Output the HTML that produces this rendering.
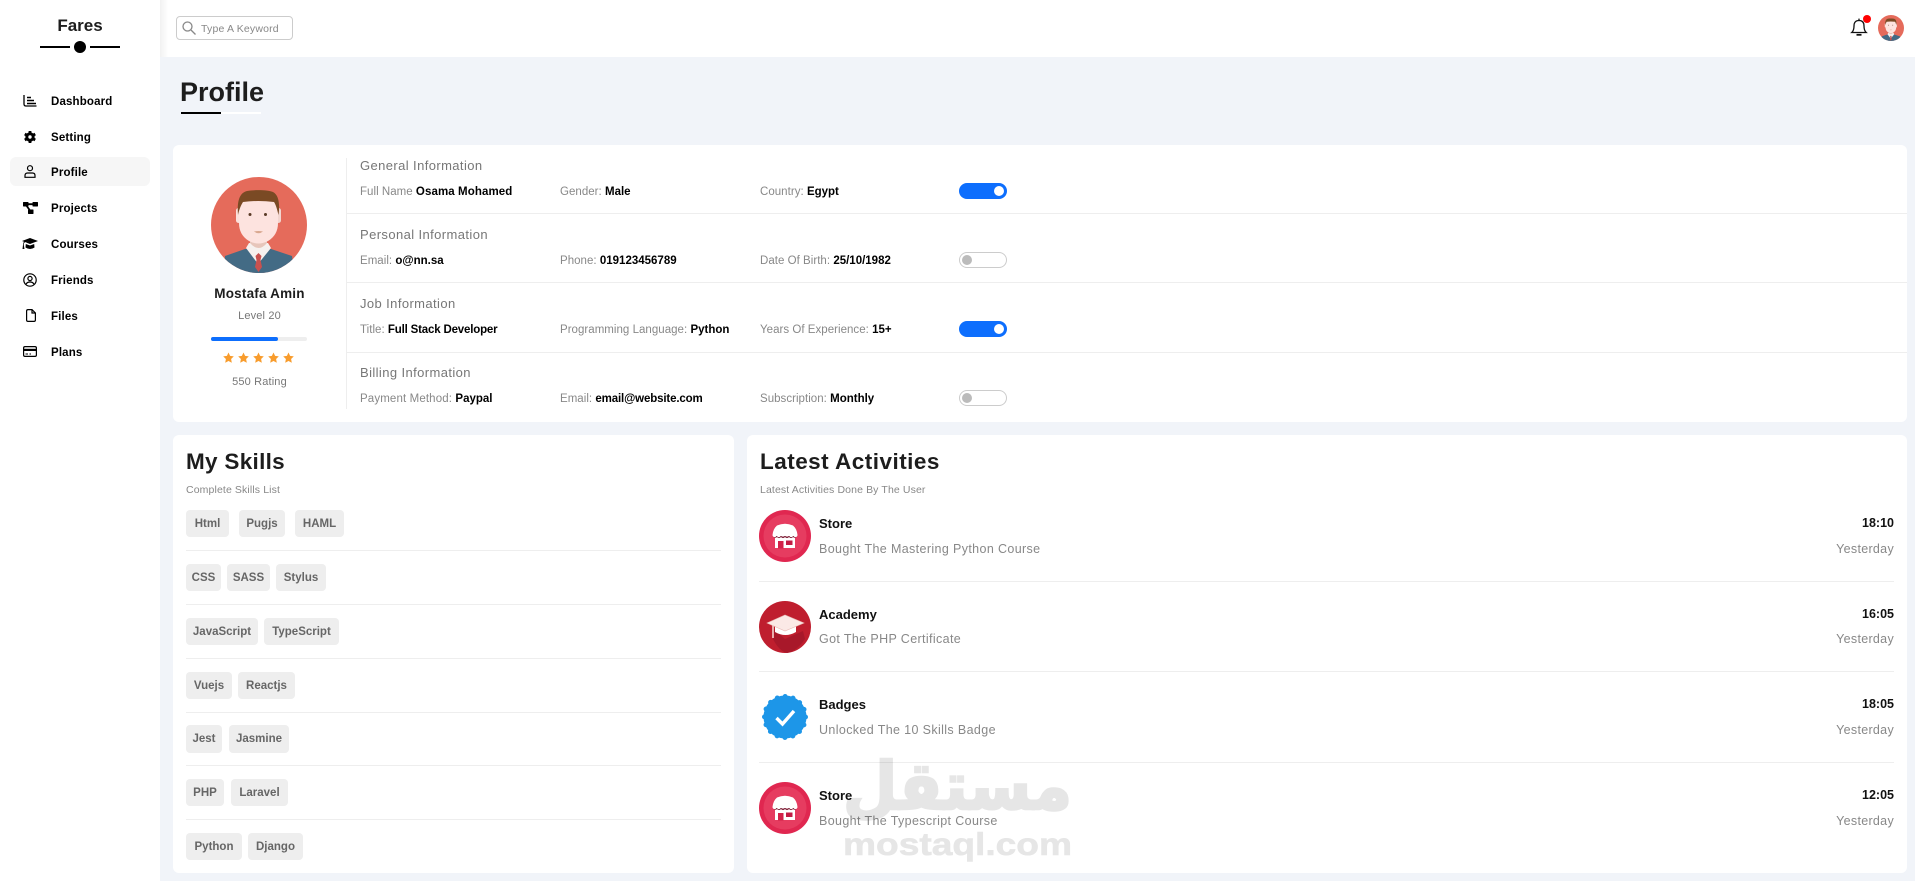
<!DOCTYPE html>
<html lang="en"><head><meta charset="utf-8"><title>Profile</title>
<style>
*{box-sizing:border-box;margin:0;padding:0}
html,body{width:1915px;height:881px;overflow:hidden;background:#f1f4f9;font-family:"Liberation Sans",sans-serif}
.a{position:absolute}
.t{position:absolute;white-space:nowrap;line-height:16px;height:16px;margin-top:-8px}
.card{position:absolute;background:#fff;border-radius:6px}
.h{height:1px;background:#eee;position:absolute}
.nav{font-size:11.5px;font-weight:700;color:#000;left:51px;letter-spacing:.15px;margin-top:-7px}
.sec{font-size:13px;color:#777;left:360px;letter-spacing:.4px}
.r{font-size:11.5px;color:#888;letter-spacing:.03px;margin-top:-7px}
.r b{color:#000;font-weight:700;letter-spacing:0}
.tg{position:absolute;left:959px;width:48px;height:16px;border-radius:8px}
.on{background:#0d6efd}
.on:after{content:"";position:absolute;right:3px;top:3px;width:10px;height:10px;border-radius:50%;background:#fff}
.off{background:#fff;border:1px solid #ccc}
.off:after{content:"";position:absolute;left:2px;top:2px;width:10px;height:10px;border-radius:50%;background:#bbb}
.chip{position:absolute;height:27px;line-height:28px;background:#eee;border-radius:4px;text-align:center;font-size:11.5px;font-weight:700;color:#666;letter-spacing:0}
.ct{font-size:22.5px;font-weight:700;color:#1d1d1d;letter-spacing:.3px;margin-top:-7px}
.cs{font-size:10.5px;color:#888;letter-spacing:.12px}
.at{font-size:13px;font-weight:700;color:#111;left:819px;margin-top:-7px}
.as{font-size:12.5px;color:#888;left:819px;letter-spacing:.37px}
.rt{right:21px;text-align:right}
.tm{font-size:12.5px;font-weight:700;color:#111}
.ys{font-size:12.5px;color:#888;letter-spacing:.3px}
svg{position:absolute;overflow:visible}
</style></head>
<body>
<svg width="0" height="0" style="position:absolute">
<defs>
<clipPath id="cc"><circle cx="48" cy="48" r="48"/></clipPath>
<symbol id="ava" viewBox="0 0 96 96">
<circle cx="48" cy="48" r="48" fill="#e56b5b"/>
<g clip-path="url(#cc)">
<path d="M14 79 L34 72 H60 L81 79 L84 100 H12Z" fill="#436b85"/>
<path d="M35 71 L47 87 L60 71 L57 66 H38Z" fill="#f6f1ef"/>
<path d="M39 58 H56 V66 Q47.500 76 39 66Z" fill="#e7c6bb"/>
<path d="M44.500 79 L47.500 76 L50.500 79 L49.500 83 L51 90 L47.500 95 L44 90 L45.500 83Z" fill="#c9514f"/>
<rect x="25" y="31" width="5" height="15" rx="2.500" fill="#fbe0db"/>
<rect x="65" y="31" width="5" height="15" rx="2.500" fill="#f2d6d0"/>
<path d="M28 24 H67 V46 Q67 58 57 64 Q47.500 69 38 64 Q28 58 28 46Z" fill="#fde3df"/>
<path d="M27 38 C26 25 28 16 36 14 C44 12.500 58 13 62 15 C68 18 69 28 67.500 38 C66 32 65 28 63 25 Q47 23 32 25 C30 28 28 33 27 38Z" fill="#7a4a24"/>
<circle cx="39" cy="37.500" r="1.500" fill="#5a3a26"/><circle cx="54.500" cy="37.500" r="1.500" fill="#5a3a26"/>
<path d="M43 54.500 Q47.500 53.500 52 54.500 Q47.500 58 43 54.500Z" fill="#d9a890"/>
</g></symbol>
<symbol id="store" viewBox="0 0 52 52">
<circle cx="26" cy="26" r="26" fill="#e02750"/>
<circle cx="26" cy="26" r="21.500" fill="#e63c60"/>
<path d="M16 25 V38 H36 V25Z" fill="#fff"/>
<path d="M14 26 a2.400 2.400 0 0 0 4 1 a2.400 2.400 0 0 0 4 0 a2.400 2.400 0 0 0 4 0 a2.400 2.400 0 0 0 4 0 a2.400 2.400 0 0 0 4 0 a2.400 2.400 0 0 0 4 -1Z" fill="#7d1c34"/>
<path d="M18 15.500 Q26 12 34 15.500 Q38 19 38.500 25 H13.500 Q14 19 18 15.500Z" fill="#fff"/>
<path d="M13.500 25 a2.100 2.100 0 0 0 4.200 0 a2.100 2.100 0 0 0 4.200 0 a2.100 2.100 0 0 0 4.100 0 a2.100 2.100 0 0 0 4.100 0 a2.100 2.100 0 0 0 4.200 0 a2.100 2.100 0 0 0 4.200 0Z" fill="#fff"/>
<rect x="19" y="31" width="5.500" height="7.500" fill="#d22249"/>
<rect x="27" y="30.500" width="6.500" height="4.500" fill="#c21c44"/>
</symbol>
</defs></svg>

<!-- sidebar -->
<div class="a" style="left:0;top:0;width:160px;height:881px;background:#fff"></div>
<div class="t" style="left:0;width:160px;text-align:center;top:26px;font-size:17px;font-weight:700;color:#1d1d1d">Fares</div>
<div class="a" style="left:40px;top:46px;width:30px;height:2px;background:#000"></div>
<div class="a" style="left:90px;top:46px;width:30px;height:2px;background:#000"></div>
<div class="a" style="left:74px;top:41px;width:12px;height:12px;border-radius:50%;background:#000"></div>
<div class="a" style="left:10px;top:157px;width:140px;height:29px;border-radius:6px;background:#f6f6f6"></div>

<div class="t nav" style="top:101px">Dashboard</div>
<div class="t nav" style="top:137px">Setting</div>
<div class="t nav" style="top:172px">Profile</div>
<div class="t nav" style="top:208px">Projects</div>
<div class="t nav" style="top:244px">Courses</div>
<div class="t nav" style="top:280px">Friends</div>
<div class="t nav" style="top:316px">Files</div>
<div class="t nav" style="top:352px">Plans</div>

<!-- nav icons -->
<svg style="left:23px;top:94px" width="14" height="13" viewBox="0 0 14 13" fill="none" stroke="#000" stroke-width="1.300"><path d="M1 1 V10 Q1 12 3 12 H13.500"/><path d="M4 3.500 H8 M4 6.500 H11 M4 9.500 H13" stroke-width="1.400"/></svg>
<svg style="left:24px;top:131px" width="12" height="12" viewBox="0 0 12 12"><circle cx="6" cy="6" r="3.200" fill="none" stroke="#000" stroke-width="3"/><path d="M6 0 V12 M.8 3 L11.200 9 M.8 9 L11.200 3" stroke="#000" stroke-width="2.800" fill="none"/><circle cx="6" cy="6" r="1.700" fill="#fff"/></svg>
<svg style="left:24px;top:165px" width="12" height="13" viewBox="0 0 12 13" fill="none" stroke="#000" stroke-width="1.200"><circle cx="6" cy="3.200" r="2.500"/><path d="M1 12.300 V10.500 Q1 8 3.500 8 H8.500 Q11 8 11 10.500 V12.300Z"/></svg>
<svg style="left:23px;top:202px" width="15" height="12" viewBox="0 0 15 12"><rect x="0" y="0" width="5.500" height="4.500" rx=".6"/><rect x="9.500" y="0" width="5.500" height="4.500" rx=".6"/><rect x="5" y="7.500" width="5.500" height="4.500" rx=".6"/><path d="M4 2.200 H11 M3 3 L7 8.500" stroke="#000" stroke-width="1.800" fill="none"/></svg>
<svg style="left:22px;top:238px" width="16" height="12" viewBox="0 0 16 12"><path d="M8 0 L16 3 L8 6 L3.500 4.300 L8 3.500 L2.800 4.300 Q1.800 5 1.800 7 L2.500 11 H.500 L1 7 Q1 4.800 2 3.800 L0 3Z"/><path d="M3.800 6 L8 7.500 L12.200 6 L12.500 9.500 Q8 12.500 3.500 9.500Z"/></svg>
<svg style="left:23px;top:273px" width="14" height="14" viewBox="0 0 14 14" fill="none" stroke="#000" stroke-width="1.200"><circle cx="7" cy="7" r="6.200"/><circle cx="7" cy="5.500" r="2.100"/><path d="M3 11.300 Q4 9 7 9 Q10 9 11 11.300"/></svg>
<svg style="left:26px;top:309px" width="10" height="13" viewBox="0 0 10 13" fill="none" stroke="#000" stroke-width="1.200"><path d="M6 .6 H2 Q.6 .6 .6 2 V11 Q.6 12.400 2 12.400 H8 Q9.400 12.400 9.400 11 V4Z"/><path d="M6 .6 V4 H9.400"/></svg>
<svg style="left:23px;top:346px" width="14" height="11" viewBox="0 0 14 11" fill="none" stroke="#000" stroke-width="1.200"><rect x=".6" y=".6" width="12.800" height="9.800" rx="1.400"/><rect x="0" y="2.800" width="14" height="2.200" fill="#000" stroke="none"/><path d="M2.500 8 H5 M6.500 8 H8" stroke-width="1"/></svg>

<!-- topbar -->
<div class="a" style="left:160px;top:0;width:1755px;height:57px;background:#fff"></div>
<div class="a" style="left:160px;top:0;width:8px;height:57px;background:linear-gradient(90deg,#f1f1f1,#fff)"></div>
<div class="a" style="left:176px;top:16px;width:117px;height:24px;border:1px solid #ccc;border-radius:4px;background:#fff"></div>
<svg style="left:182px;top:21px" width="14" height="14" viewBox="0 0 14 14" fill="none" stroke="#888" stroke-width="1.300"><circle cx="5.500" cy="5.500" r="4.500"/><path d="M9 9 L13.500 13.500"/></svg>
<div class="t" style="left:201px;top:29px;font-size:10.500px;color:#888;letter-spacing:.18px">Type A Keyword</div>
<svg style="left:1851px;top:18px" width="16" height="19" viewBox="0 0 16 19" fill="none" stroke="#111" stroke-width="1.300"><path d="M.8 14.500 Q3 12.500 3 8 Q3 2.500 8 2.500 Q13 2.500 13 8 Q13 12.500 15.200 14.500Z"/><path d="M8 .6 V2.500" /><path d="M5.500 16.800 H10.500" stroke-width="1.800"/></svg>
<div class="a" style="left:1863px;top:15px;width:8px;height:8px;border-radius:50%;background:#f00"></div>
<svg style="left:1878px;top:15px" width="26" height="26"><use href="#ava" width="26" height="26"/></svg>

<!-- title -->
<div class="t" style="left:180px;top:92px;font-size:27px;line-height:30px;height:30px;margin-top:-15px;font-weight:700;color:#1d1d1d">Profile</div>
<div class="a" style="left:181px;top:112px;width:40px;height:2px;background:#000"></div>
<div class="a" style="left:221px;top:112px;width:40px;height:2px;background:#fff"></div>

<!-- profile card -->
<div class="card" style="left:173px;top:145px;width:1734px;height:277px"></div>
<div class="a" style="left:346px;top:158px;width:1px;height:251px;background:#eee"></div>
<div class="h" style="left:347px;top:213px;width:1560px"></div>
<div class="h" style="left:347px;top:282px;width:1560px"></div>
<div class="h" style="left:347px;top:352px;width:1560px"></div>

<svg style="left:211px;top:177px" width="96" height="96"><use href="#ava" width="96" height="96"/></svg>
<div class="t" style="left:173px;width:173px;text-align:center;top:293px;font-size:13.500px;font-weight:700;color:#1d1d1d;letter-spacing:.2px;margin-top:-7px">Mostafa Amin</div>
<div class="t" style="left:173px;width:173px;text-align:center;top:316px;font-size:11px;color:#777;letter-spacing:.15px">Level 20</div>
<div class="a" style="left:211px;top:337px;width:96px;height:4px;border-radius:2px;background:#eee"></div>
<div class="a" style="left:211px;top:337px;width:67px;height:4px;border-radius:2px;background:#0d6efd"></div>
<svg style="left:223px;top:352px" width="74" height="12" viewBox="0 0 74 12" fill="#f89c2d">
<path d="M5.500 .5 L7.100 3.900 L10.800 4.400 L8.100 7 L8.800 10.800 L5.500 9 L2.200 10.800 L2.900 7 L.2 4.400 L3.900 3.900Z"/>
<path transform="translate(15 0)" d="M5.500 .5 L7.100 3.900 L10.800 4.400 L8.100 7 L8.800 10.800 L5.500 9 L2.200 10.800 L2.900 7 L.2 4.400 L3.900 3.900Z"/>
<path transform="translate(30 0)" d="M5.500 .5 L7.100 3.900 L10.800 4.400 L8.100 7 L8.800 10.800 L5.500 9 L2.200 10.800 L2.900 7 L.2 4.400 L3.900 3.900Z"/>
<path transform="translate(45 0)" d="M5.500 .5 L7.100 3.900 L10.800 4.400 L8.100 7 L8.800 10.800 L5.500 9 L2.200 10.800 L2.900 7 L.2 4.400 L3.900 3.900Z"/>
<path transform="translate(60 0)" d="M5.500 .5 L7.100 3.900 L10.800 4.400 L8.100 7 L8.800 10.800 L5.500 9 L2.200 10.800 L2.900 7 L.2 4.400 L3.900 3.900Z"/>
</svg>
<div class="t" style="left:173px;width:173px;text-align:center;top:382px;font-size:11px;color:#777;letter-spacing:.15px">550 Rating</div>

<div class="t sec" style="top:166px">General Information</div>
<div class="t r" style="left:360px;top:191px">Full Name <b style="letter-spacing:.1px">Osama Mohamed</b></div>
<div class="t r" style="left:560px;top:191px">Gender: <b>Male</b></div>
<div class="t r" style="left:760px;top:191px">Country: <b>Egypt</b></div>
<div class="tg on" style="top:183px"></div>

<div class="t sec" style="top:235px">Personal Information</div>
<div class="t r" style="left:360px;top:260px">Email: <b>o@nn.sa</b></div>
<div class="t r" style="left:560px;top:260px">Phone: <b>019123456789</b></div>
<div class="t r" style="left:760px;top:260px">Date Of Birth: <b>25/10/1982</b></div>
<div class="tg off" style="top:252px"></div>

<div class="t sec" style="top:304px">Job Information</div>
<div class="t r" style="left:360px;top:329px">Title: <b style="letter-spacing:-.18px">Full Stack Developer</b></div>
<div class="t r" style="left:560px;top:329px">Programming Language: <b>Python</b></div>
<div class="t r" style="left:760px;top:329px">Years Of Experience: <b>15+</b></div>
<div class="tg on" style="top:321px"></div>

<div class="t sec" style="top:373px">Billing Information</div>
<div class="t r" style="left:360px;top:398px;letter-spacing:.13px">Payment Method: <b>Paypal</b></div>
<div class="t r" style="left:560px;top:398px">Email: <b style="letter-spacing:-.14px">email@website.com</b></div>
<div class="t r" style="left:760px;top:398px">Subscription: <b>Monthly</b></div>
<div class="tg off" style="top:390px"></div>

<!-- skills -->
<div class="card" style="left:173px;top:435px;width:561px;height:438px"></div>
<div class="t ct" style="left:186px;top:461px">My Skills</div>
<div class="t cs" style="left:186px;top:490px">Complete Skills List</div>
<div class="chip" style="left:186px;top:510px;width:43px">Html</div>
<div class="chip" style="left:239px;top:510px;width:46px">Pugjs</div>
<div class="chip" style="left:295px;top:510px;width:49px">HAML</div>
<div class="h" style="left:186px;top:550px;width:535px"></div>
<div class="chip" style="left:186px;top:564px;width:35px">CSS</div>
<div class="chip" style="left:227px;top:564px;width:43px">SASS</div>
<div class="chip" style="left:276px;top:564px;width:50px">Stylus</div>
<div class="h" style="left:186px;top:604px;width:535px"></div>
<div class="chip" style="left:186px;top:618px;width:72px">JavaScript</div>
<div class="chip" style="left:264px;top:618px;width:75px">TypeScript</div>
<div class="h" style="left:186px;top:658px;width:535px"></div>
<div class="chip" style="left:186px;top:672px;width:46px">Vuejs</div>
<div class="chip" style="left:238px;top:672px;width:57px">Reactjs</div>
<div class="h" style="left:186px;top:712px;width:535px"></div>
<div class="chip" style="left:186px;top:725px;width:36px;height:28px">Jest</div>
<div class="chip" style="left:229px;top:725px;width:60px;height:28px">Jasmine</div>
<div class="h" style="left:186px;top:765px;width:535px"></div>
<div class="chip" style="left:186px;top:779px;width:38px">PHP</div>
<div class="chip" style="left:231px;top:779px;width:57px">Laravel</div>
<div class="h" style="left:186px;top:819px;width:535px"></div>
<div class="chip" style="left:186px;top:833px;width:56px">Python</div>
<div class="chip" style="left:248px;top:833px;width:55px">Django</div>

<!-- activities -->
<div class="card" style="left:747px;top:435px;width:1160px;height:438px"></div>
<div class="t ct" style="left:760px;top:461px;letter-spacing:.48px">Latest Activities</div>
<div class="t cs" style="left:760px;top:490px">Latest Activities Done By The User</div>

<svg style="left:759px;top:510px" width="52" height="52"><use href="#store" width="52" height="52"/></svg>
<div class="t at" style="top:523px">Store</div>
<div class="t as" style="top:549px">Bought The Mastering Python Course</div>
<div class="t tm rt" style="top:523px">18:10</div>
<div class="t ys rt" style="top:549px">Yesterday</div>
<div class="h" style="left:759px;top:581px;width:1135px"></div>

<svg style="left:759px;top:601px" width="52" height="52" viewBox="0 0 52 52">
<circle cx="26" cy="26" r="26" fill="#bf1e2e"/>
<path d="M14 27 L26 38 L44 30 L46 38 Q38 50 28 52 Q20 50 14 38Z" fill="#a8182a"/>
<path d="M16 25 H37 V31 Q26.500 37 16 31Z" fill="#fff"/>
<path d="M8 22 L26 14 L45 22 L26 30Z" fill="#fbe9e6" stroke="#e8b9b4" stroke-width=".6"/>
<path d="M14 24 L14 37" stroke="#f5d5d0" stroke-width="1.600"/>
</svg>
<div class="t at" style="top:614px">Academy</div>
<div class="t as" style="top:639px">Got The PHP Certificate</div>
<div class="t tm rt" style="top:614px">16:05</div>
<div class="t ys rt" style="top:639px">Yesterday</div>
<div class="h" style="left:759px;top:671px;width:1135px"></div>

<svg style="left:762px;top:694px" width="46" height="46" viewBox="0 0 46 46">
<circle cx="23" cy="23" r="21.500" fill="#1d96e8"/>
<circle cx="23" cy="23" r="20.500" fill="none" stroke="#1d96e8" stroke-width="5" stroke-linecap="round" stroke-dasharray="0 8.050"/>
<path d="M14.500 24 L20.500 30 L32 17" fill="none" stroke="#fff" stroke-width="3.400"/>
</svg>
<div class="t at" style="top:704px">Badges</div>
<div class="t as" style="top:730px">Unlocked The 10 Skills Badge</div>
<div class="t tm rt" style="top:704px">18:05</div>
<div class="t ys rt" style="top:730px">Yesterday</div>
<div class="h" style="left:759px;top:762px;width:1135px"></div>

<svg style="left:759px;top:782px" width="52" height="52"><use href="#store" width="52" height="52"/></svg>
<div class="t at" style="top:795px">Store</div>
<div class="t as" style="top:821px">Bought The Typescript Course</div>
<div class="t tm rt" style="top:795px">12:05</div>
<div class="t ys rt" style="top:821px">Yesterday</div>

<!-- watermark -->
<svg style="left:843px;top:750px;mix-blend-mode:multiply" width="232" height="120" viewBox="0 0 232 120">
<text x="0" y="59" font-family="'DejaVu Sans',sans-serif" font-weight="700" font-size="66" fill="#e6e6e6" stroke="#e6e6e6" stroke-width="2.500" direction="rtl" text-anchor="end" textLength="229" lengthAdjust="spacingAndGlyphs">مستقل</text>
<text x="0" y="105" font-family="'Liberation Sans',sans-serif" font-weight="700" font-size="31.500" fill="#e6e6e6" stroke="#e6e6e6" stroke-width=".6" textLength="229" lengthAdjust="spacingAndGlyphs">mostaql.com</text>
</svg>
</body></html>
